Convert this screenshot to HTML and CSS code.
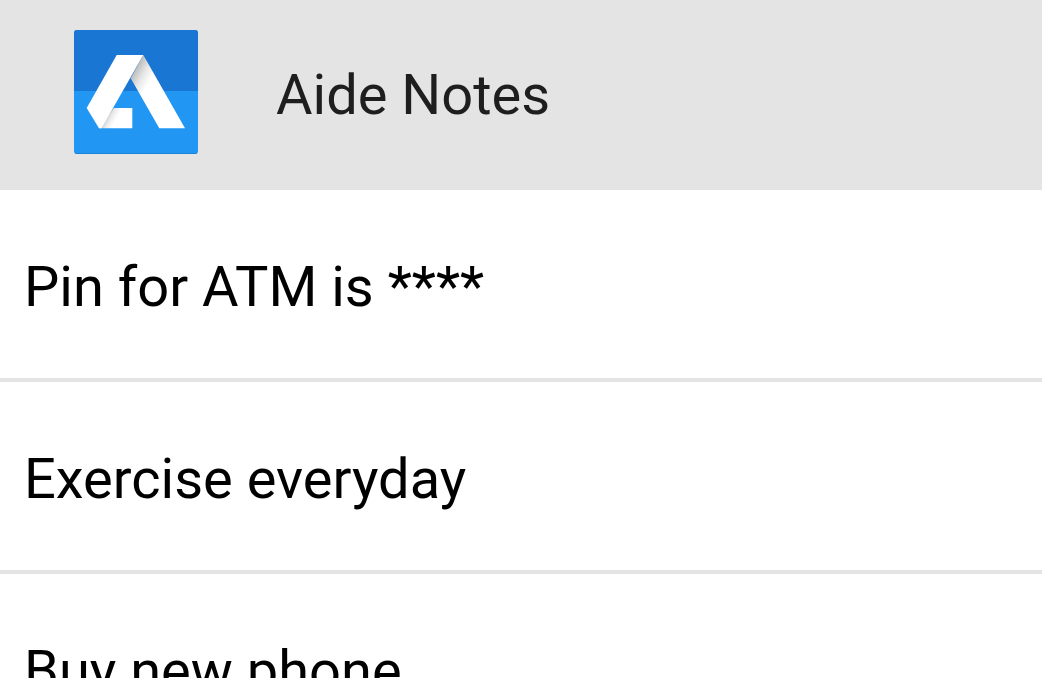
FILE: index.html
```html
<!DOCTYPE html>
<html lang="en">
<head>
<meta charset="utf-8">
<meta name="viewport" content="width=device-width, initial-scale=1">
<title>Aide Notes</title>
<link rel="stylesheet" href="styles.css">
</head>
<body>
<header class="app-bar">
<svg class="logo" viewBox="0 0 124 124" aria-hidden="true">
<defs>
<linearGradient id="leg-shade" gradientUnits="userSpaceOnUse" x1="61" y1="40" x2="77" y2="49">
<stop offset="0" stop-color="#bdbdbd"/><stop offset=".5" stop-color="#e6e6e6"/><stop offset="1" stop-color="#fff"/>
</linearGradient>
<linearGradient id="foot-shade" gradientUnits="userSpaceOnUse" x1="31" y1="88" x2="40" y2="93">
<stop offset="0" stop-color="#c4c4c4"/><stop offset=".5" stop-color="#ececec"/><stop offset="1" stop-color="#fff"/>
</linearGradient>
</defs>
<rect width="124" height="124" rx="3" fill="#2196f3"/>
<path fill="#1976d2" d="M0 61V3a3 3 0 0 1 3-3h118a3 3 0 0 1 3 3v58z"/>
<path fill="none" stroke="#1565a8" stroke-opacity=".4" d="M1 123.500h122"/>
<path fill="url(#leg-shade)" d="M69.300 25L111 98.300H85.300L56.700 48.300z"/>
<path fill="url(#foot-shade)" d="M39.700 78h18.600v20.300H25z"/>
<path fill="#fff" d="M42.700 25h26.600L27.500 98.300H25L12.700 78z"/>
</svg>
<h1 class="title">Aide Notes</h1>
</header>
<main>
<ul class="notes">
<li class="note">Pin for ATM is ****</li>
<li class="note">Exercise everyday</li>
<li class="note">Buy new phone</li>
</ul>
</main>
</body>
</html>
```
FILE: styles.css
```css
body {
  margin: 0;
  background: #fff;
  color: #000;
  font-family: Roboto, sans-serif;
  font-size: 56px;
  line-height: 66px;
}
.app-bar {
  display: flex;
  align-items: center;
  gap: 78px;
  padding: 30px 74px;
  background: #e4e4e4;
}
.logo {
  width: 124px;
  height: 124px;
  margin-bottom: 6px;
}
.title {
  margin: 0;
  color: #1e1e1e;
  font-size: 56px;
  font-weight: 400;
}
.notes {
  margin: 0;
  padding: 0;
  list-style: none;
}
.note {
  padding: 64px 24px 58px;
  border-bottom: 4px solid #e4e4e4;
}
```
